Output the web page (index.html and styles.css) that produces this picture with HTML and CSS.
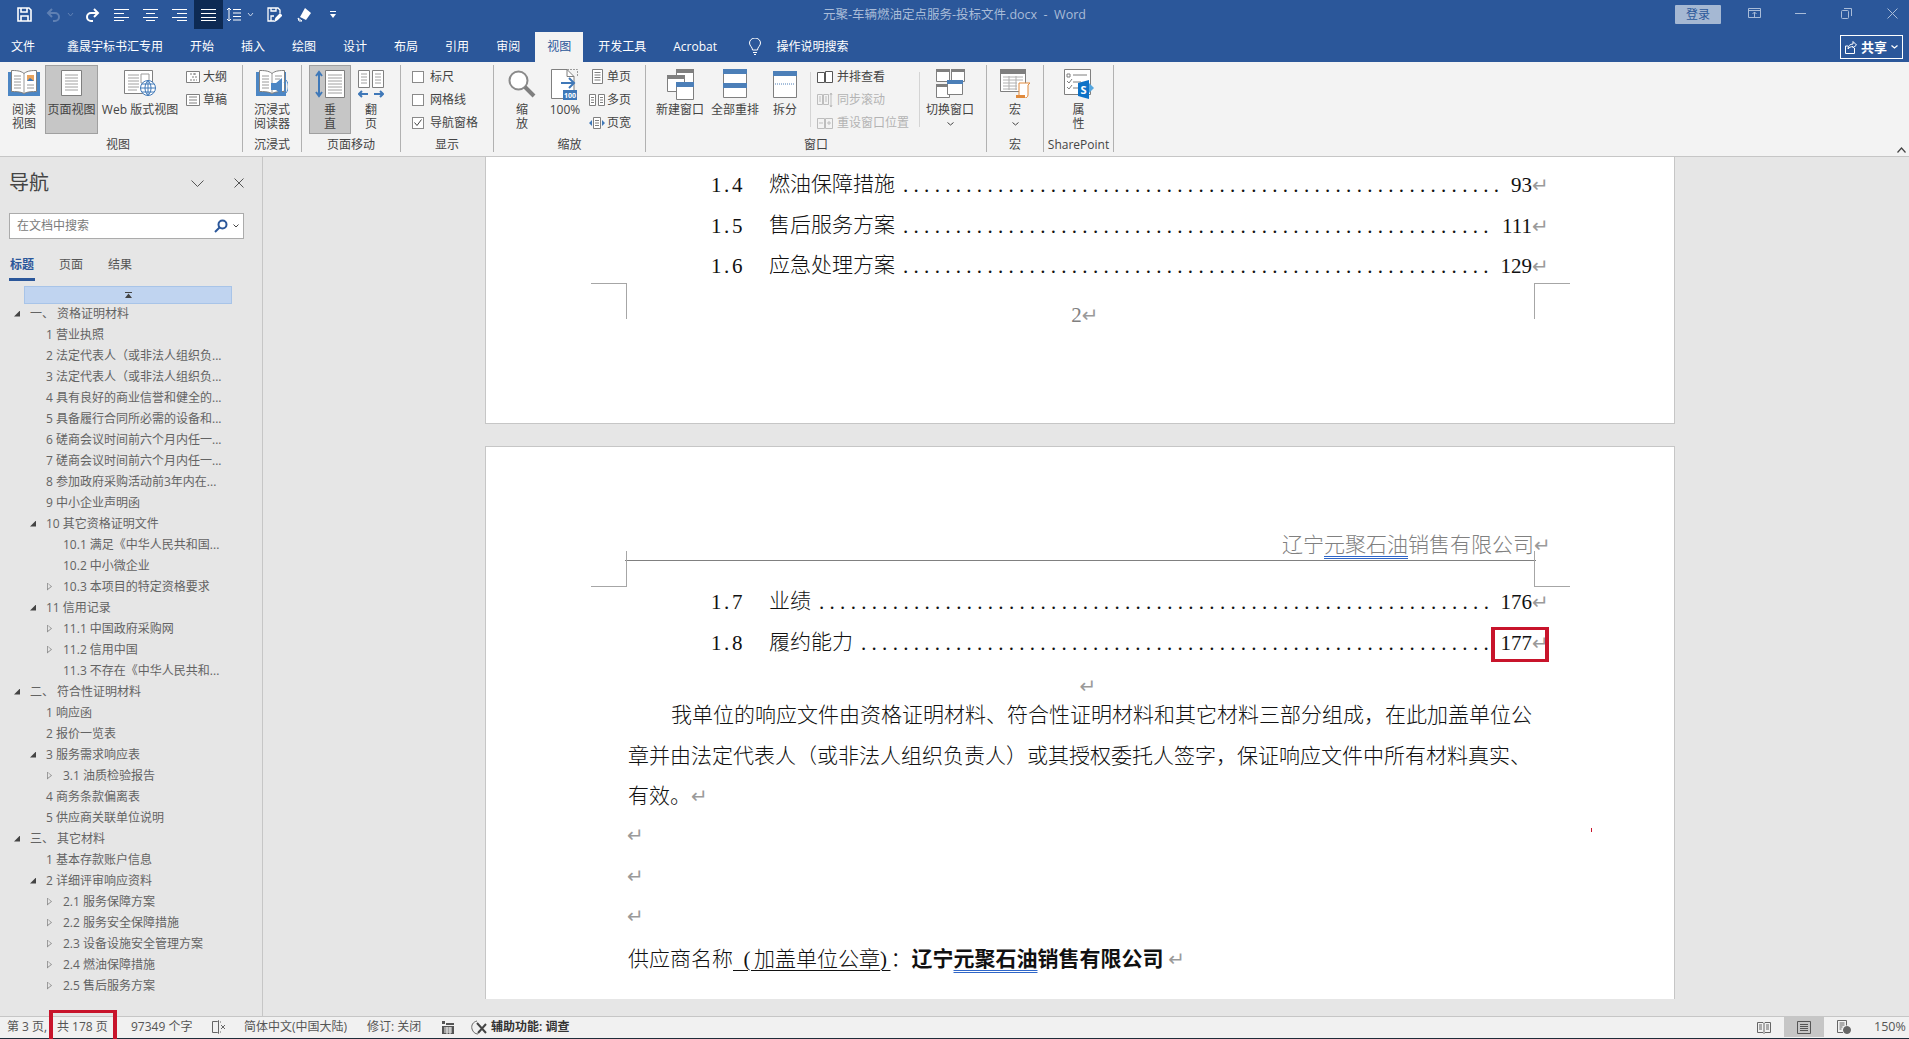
FILE: index.html
```html
<!DOCTYPE html>
<html lang="zh-CN">
<head>
    <meta charset="UTF-8">
    <title>元聚-车辆燃油定点服务-投标文件.docx - Word</title>
    <link rel="stylesheet" href="styles.css">
</head>
<body>
    <!-- Title bar -->
    <header class="title-bar">
        <div class="qat">
            <span class="qat-btn"><svg width="15" height="15" viewBox="0 0 15 15" fill="none" stroke="#fff" stroke-width="1.6"><path d="M1 1h11l2 2v11H1z"/><path d="M4 1v4h6V1M4 14V9h7v5"/></svg></span>
            <span class="qat-btn undo"><svg width="15" height="14" viewBox="0 0 15 14" fill="none" stroke="#5f80b3" stroke-width="2"><path d="M6 1L2 5l4 4M2 5h7a4 4 0 0 1 0 8H7"/></svg><svg class="caret" width="7" height="4" viewBox="0 0 7 4" fill="none" stroke="#5f80b3"><path d="M1 0l2.5 3L6 0"/></svg></span>
            <span class="qat-btn"><svg width="15" height="14" viewBox="0 0 15 14" fill="none" stroke="#fff" stroke-width="2"><path d="M9 1l4 4-4 4M13 5H6a4 4 0 0 0 0 8h2"/></svg></span>
            <span class="qat-btn"><svg width="15" height="12" viewBox="0 0 15 12" stroke="#fff"><path d="M0 .5h15M0 4.500h10M0 8.500h15M0 11.500h10"/></svg></span>
            <span class="qat-btn"><svg width="15" height="12" viewBox="0 0 15 12" stroke="#fff"><path d="M0 .5h15M3 4.500h9M0 8.500h15M3 11.500h9"/></svg></span>
            <span class="qat-btn"><svg width="15" height="12" viewBox="0 0 15 12" stroke="#fff"><path d="M0 .5h15M5 4.500h10M0 8.500h15M5 11.500h10"/></svg></span>
            <span class="qat-btn on"><svg width="15" height="12" viewBox="0 0 15 12" stroke="#fff"><path d="M0 .5h15M0 4.500h15M0 8.500h15M0 11.500h15"/></svg></span>
            <span class="qat-btn spacing"><svg width="15" height="15" viewBox="0 0 15 15" fill="none" stroke="#fff"><path d="M3 1v13M1 3l2-2 2 2M1 12l2 2 2-2M7 2.500h8M7 6h8M7 9.500h8M7 13h8"/></svg><svg class="caret" width="7" height="4" viewBox="0 0 7 4" fill="none" stroke="#c5d2e6"><path d="M1 0l2.500 3L6 0"/></svg></span>
            <span class="qat-btn"><svg width="15" height="15" viewBox="0 0 15 15" fill="none" stroke="#fff" stroke-width="1.300"><path d="M7 14H1V1h10l2 2v3"/><path d="M4 1v3h5V1M4 14V9h3"/><path d="M8 14l1-3 4-4 1.500 1.500-4 4z" fill="#fff"/></svg></span>
            <span class="qat-btn ink"><svg width="15" height="15" viewBox="0 0 15 15" fill="#fff"><path d="M8 1l6 5-5 7-6-3z"/><path d="M1 11l4 3H2z" fill="none" stroke="#fff"/></svg></span>
            <span class="qat-btn more"><svg width="6" height="7" viewBox="0 0 6 7" fill="#fff"><path d="M0 0h6v1H0zM0 3h6L3 7z"/></svg></span>
        </div>
        <div class="doc-title">元聚-车辆燃油定点服务-投标文件.docx&nbsp; - &nbsp;Word</div>
        <div class="win-ctl">
            <span class="login">登录</span>
            <span class="win-btn"><svg width="13" height="10" viewBox="0 0 13 10" fill="none" stroke="#a9bcd8"><path d="M.5.500h12v9H.5zM.5 2.500h12M6.500 9V4M4.500 6l2-2 2 2"/></svg></span>
            <span class="win-btn"><svg width="11" height="1" viewBox="0 0 11 1" stroke="#a9bcd8"><path d="M0 .5h11"/></svg></span>
            <span class="win-btn"><svg width="11" height="11" viewBox="0 0 11 11" fill="none" stroke="#a9bcd8"><rect x=".5" y="2.500" width="7" height="8" rx="1"/><path d="M3 .5h7.500V8"/></svg></span>
            <span class="win-btn"><svg width="11" height="11" viewBox="0 0 11 11" fill="none" stroke="#a9bcd8"><path d="M.5.500l10 10M10.500.500l-10 10"/></svg></span>
        </div>
    </header>

    <!-- Tabs -->
    <nav class="tabs">
        <span class="tab tab-file">文件</span>
        <span class="tab">鑫晟宇标书汇专用</span>
        <span class="tab">开始</span>
        <span class="tab">插入</span>
        <span class="tab">绘图</span>
        <span class="tab">设计</span>
        <span class="tab">布局</span>
        <span class="tab">引用</span>
        <span class="tab">审阅</span>
        <span class="tab active">视图</span>
        <span class="tab">开发工具</span>
        <span class="tab">Acrobat</span>
        <span class="tell-me">
            <svg width="12" height="18" viewBox="0 0 12 18" fill="none" stroke="#fff"><path d="M3.500 12c0-3-3-4-3-7a5.500 5 0 0 1 11 0c0 3-3 4-3 7zM4 14.500h4M5 16.500h2"/></svg>
            操作说明搜索
        </span>
        <span class="share">
            <svg width="12" height="14" viewBox="0 0 12 14" fill="none" stroke="#fff"><path d="M3 6H.5v7.500h9V8M3 9c0-3 2-5 5-5V1.500L11.500 5 8 8V6.500c-2 0-4 1-5 2.500z"/></svg>
            <b>共享</b>
            <svg width="7" height="4" viewBox="0 0 7 4" fill="none" stroke="#fff" stroke-width="1.300"><path d="M.5.500l3 2.500 3-2.500"/></svg>
        </span>
    </nav>

    <!-- Ribbon -->
    <section class="ribbon">
        <div class="group g-view">
            <div class="group-body">
                <div class="big w42">
                    <svg width="32" height="26" viewBox="0 0 32 26"><path d="M0 2h4v20h11l1 2 1-2h11V2h4v24H0z" fill="#4c86c4"/><path d="M3.500.5c4 0 9 0 12.500 3 3.500-3 8.500-3 12.500-3v21c-4 0-9 0-12.500 2-3.500-2-8.500-2-12.500-2z" fill="#fff" stroke="#7f7f7f"/><path d="M16 3v20M6 6h7M6 9h7M6 12h7M6 15h7M6 18h7M19 15h7M19 18h7" stroke="#9a9a9a"/><path d="M19 5h7v6h-7z" fill="#e8a35d"/><path d="M19 11l3-3 4 3z" fill="#3f78b8"/></svg>
                    <span>阅读<br>视图</span>
                </div>
                <div class="big w53 on">
                    <svg width="21" height="26" viewBox="0 0 21 26" fill="#fff" stroke="#7f7f7f"><path d="M.5.500h20v25H.5z"/><path d="M4 5h13M4 8h13M4 11h13M4 14h13M4 17h13M4 20h13" stroke="#a0a0a0" fill="none"/></svg>
                    <span>页面视图</span>
                </div>
                <div class="big w80">
                    <svg width="32" height="26" viewBox="0 0 32 26"><path d="M.5.500h28v23H.5z" fill="#fff" stroke="#7f7f7f"/><path d="M4 5h11M4 8h11M4 11h11M4 14h11M4 17h11M4 20h9" stroke="#a0a0a0"/><path d="M17 4h8v9h-8z" fill="#fff" stroke="#9a9a9a"/><circle cx="24" cy="18" r="7.500" fill="#fff" stroke="#3f78b8"/><path d="M16.500 18h15M24 10.500v15M18 14h12M18 22h12M24 10.500c-4 4-4 11 0 15M24 10.500c4 4 4 11 0 15" stroke="#3f78b8" fill="none"/></svg>
                    <span>Web 版式视图</span>
                </div>
                <div class="stack s-view">
                    <div class="small"><span class="ico"><svg width="14" height="12" viewBox="0 0 14 12" fill="#fff" stroke="#7f7f7f"><path d="M.5.500h13v11H.5z"/><path d="M4 3h6M8 3h3M6 6h5M4 9h7" stroke-dasharray="2 1" fill="none"/></svg></span>大纲</div>
                    <div class="small"><span class="ico"><svg width="14" height="12" viewBox="0 0 14 12" fill="#fff" stroke="#7f7f7f"><path d="M.5.500h13v11H.5z"/><path d="M3 3h8M3 6h8M3 9h8" fill="none"/></svg></span>草稿</div>
                </div>
            </div>
            <div class="group-label">视图</div>
        </div>

        <div class="group g-immersive">
            <div class="group-body">
                <div class="big w58">
                    <svg width="32" height="26" viewBox="0 0 32 26"><path d="M0 2h4v20h11l1 2 1-2h11V2h2v24H0z" fill="#4c86c4"/><path d="M3.500.5c4 0 9 0 12.500 3 3.500-3 8.500-3 12.500-3v21c-4 0-9 0-12.500 2-3.500-2-8.500-2-12.500-2z" fill="#fff" stroke="#7f7f7f"/><path d="M16 3v20M6 6h7M6 9h7M6 12h7M6 15h7M6 18h7M19 6h7M19 9h5" stroke="#9a9a9a"/><path d="M15 13h5l6-5v17l-6-5h-5z" fill="#4c86c4"/><path d="M28 12c2 3 2 6 0 9M30 10c3 4 3 9 0 13" stroke="#4c86c4" fill="none"/></svg>
                    <span>沉浸式<br>阅读器</span>
                </div>
            </div>
            <div class="group-label">沉浸式</div>
        </div>

        <div class="group g-move">
            <div class="group-body">
                <div class="big w42 on">
                    <svg width="30" height="28" viewBox="0 0 30 28"><path d="M4 3v22M1 6l3-4 3 4M1 22l3 4 3-4" stroke="#3f78b8" stroke-width="2" fill="none"/><path d="M10.500.5h19v27h-19z" fill="#fff" stroke="#7f7f7f"/><path d="M13 5h14M13 8h14M13 11h14M13 14h14M13 17h14M13 20h14M13 23h14" stroke="#a0a0a0"/></svg>
                    <span>垂<br>直</span>
                </div>
                <div class="big w40">
                    <svg width="26" height="28" viewBox="0 0 26 28"><path d="M.5.500h11v17H.5zM14.500.500h11v17h-11z" fill="#fff" stroke="#7f7f7f"/><path d="M3 4h6M3 7h6M3 10h6M3 13h6M17 4h6M17 7h6M17 10h6M17 13h6" stroke="#a0a0a0"/><path d="M1 24h9M4 21l-3 3 3 3M16 24h9M22 21l3 3-3 3" stroke="#3f78b8" stroke-width="2" fill="none"/></svg>
                    <span>翻<br>页</span>
                </div>
            </div>
            <div class="group-label">页面移动</div>
        </div>

        <div class="group g-show">
            <div class="group-body">
                <div class="stack">
                    <div class="small"><span class="check"></span>标尺</div>
                    <div class="small"><span class="check"></span>网格线</div>
                    <div class="small"><span class="check"><svg width="10" height="9" viewBox="0 0 10 9" fill="none" stroke="#444"><path d="M1.500 4.500l2.500 3 4.500-6"/></svg></span>导航窗格</div>
                </div>
            </div>
            <div class="group-label">显示</div>
        </div>

        <div class="group g-zoom">
            <div class="group-body">
                <div class="big w44">
                    <svg width="28" height="28" viewBox="0 0 28 28" fill="none"><circle cx="10.500" cy="10.500" r="9" fill="#fff" stroke="#8a8a8a" stroke-width="2"/><path d="M17 17l9 9" stroke="#7f7f7f" stroke-width="4"/></svg>
                    <span>缩<br>放</span>
                </div>
                <div class="big w42">
                    <svg width="28" height="32" viewBox="0 0 28 32" class="up"><path d="M.5.500H16l7 7v22H.5z" fill="#fff" stroke="#7f7f7f"/><path d="M16 .5v7h7" fill="none" stroke="#7f7f7f"/><path d="M16 .5h10.500v7" fill="none" stroke="#9a9a9a" stroke-dasharray="2 1"/><path d="M10 14h13M18 9l5 5-5 5" stroke="#3f78b8" stroke-width="2" fill="none"/><rect x="12" y="21" width="14" height="10" fill="#3f78b8"/><text x="19" y="29" class="svg-mini">100</text></svg>
                    <span class="low">100%</span>
                </div>
                <div class="stack s-zoom">
                    <div class="small"><span class="ico"><svg width="11" height="15" viewBox="0 0 11 15" fill="#fff" stroke="#7f7f7f"><path d="M.5.500h10v14H.5z"/><path d="M2.500 3.500h6M2.500 6h6M2.500 8.500h6M2.500 11h6" fill="none"/></svg></span>单页</div>
                    <div class="small"><span class="ico"><svg width="16" height="12" viewBox="0 0 16 12" fill="#fff" stroke="#7f7f7f"><path d="M.5.500h6v11h-6zM9.500.500h6v11h-6z"/><path d="M2 3.500h3M2 6h3M2 8.500h3M11 3.500h3M11 6h3M11 8.500h3" fill="none"/></svg></span>多页</div>
                    <div class="small"><span class="ico"><svg width="16" height="12" viewBox="0 0 16 12"><path d="M4.500.500h7v11h-7z" fill="#fff" stroke="#7f7f7f"/><path d="M6 3.500h4M6 6h4M6 8.500h4" stroke="#7f7f7f"/><path d="M3 3L0 6l3 3zM13 3l3 3-3 3z" fill="#3f78b8"/></svg></span>页宽</div>
                </div>
            </div>
            <div class="group-label">缩放</div>
        </div>

        <div class="group g-window">
            <div class="group-body">
                <div class="big w50">
                    <svg width="27" height="31" viewBox="0 0 27 31" class="up"><path d="M9.500.500h17v17h-17z" fill="#fff" stroke="#7f7f7f"/><path d="M9 0h18v4H9z" fill="#7f7f7f"/><path d="M.5 6.500h17v16H.5z" fill="#fff" stroke="#7f7f7f"/><path d="M0 6h18v4H0z" fill="#7f7f7f"/><path d="M9.500 13.500h17v17h-17z" fill="#fff" stroke="#7f7f7f"/><path d="M9 13h18v5H9z" fill="#4c7fb8"/></svg>
                    <span class="low">新建窗口</span>
                </div>
                <div class="big w50 m5">
                    <svg width="24" height="29" viewBox="0 0 24 29" class="up"><path d="M.5.500h23v28H.5z" fill="#fff" stroke="#7f7f7f"/><path d="M0 0h24v5H0zM0 14h24v5H0z" fill="#4c7fb8"/></svg>
                    <span class="low">全部重排</span>
                </div>
                <div class="big w50">
                    <svg width="24" height="29" viewBox="0 0 24 29" class="up"><path d="M.5 2.500h23v26H.5z" fill="#fff" stroke="#7f7f7f"/><path d="M0 2h24v5H0z" fill="#4c7fb8"/><path d="M2 15h20" stroke="#4c7fb8" stroke-dasharray="1 1"/></svg>
                    <span class="low">拆分</span>
                </div>
                <i class="thin-sep"></i>
                <div class="stack s-window">
                    <div class="small"><span class="ico"><svg width="16" height="12" viewBox="0 0 16 12" fill="#fff" stroke="#555"><path d="M.5 1.500h7v10h-7zM8.500.500h7v11h-7z"/></svg></span>并排查看</div>
                    <div class="small dim"><span class="ico"><svg width="16" height="16" viewBox="0 0 16 16" fill="#f3f3f3" stroke="#bdbdbd"><path d="M.5 2.500h5v10h-5zM6.500 2.500h5v10h-5z"/><path d="M2 5h2M2 7h2M2 9h2M8 5h2M8 7h2M8 9h2M14 1v14M13 3l1-2 1 2M13 13l1 2 1-2" fill="none"/></svg></span>同步滚动</div>
                    <div class="small dim"><span class="ico"><svg width="16" height="12" viewBox="0 0 16 12" fill="#f3f3f3" stroke="#bdbdbd"><path d="M.5 1.500h7v10h-7zM8.500 1.500h7v10h-7z"/><path d="M2 6h4M12 4v4M10 6h4" fill="none"/></svg></span>重设窗口位置</div>
                </div>
                <i class="thin-sep"></i>
                <div class="big w50 m5">
                    <svg width="29" height="31" viewBox="0 0 29 31" class="up"><path d="M.5.500h13v12H.5zM15.500.500h13v12h-13zM.5 15.500h13v13H.5z" fill="#fff" stroke="#7f7f7f"/><path d="M0 0h14v3H0zM15 0h14v3H15zM0 15h14v3H0z" fill="#7f7f7f"/><path d="M11.500 11.500h15v14h-15z" fill="#fff" stroke="#7f7f7f"/><path d="M11 11h16v4H11z" fill="#4c7fb8"/></svg>
                    <span class="low">切换窗口</span>
                    <svg class="caret-low" width="7" height="4" viewBox="0 0 7 4" fill="none" stroke="#444"><path d="M.5.500l3 2.500 3-2.500"/></svg>
                </div>
            </div>
            <div class="group-label">窗口</div>
        </div>

        <div class="group g-macro">
            <div class="group-body">
                <div class="big w56">
                    <svg width="31" height="29" viewBox="0 0 31 29" class="up"><path d="M.5.500h25v22H.5z" fill="#fff" stroke="#7f7f7f"/><path d="M0 0h26v5H0z" fill="#7f7f7f"/><path d="M3 8h20M3 11h20M3 14h14M3 17h14M3 20h14M9 7v14M16 7v14" stroke="#b0b0b0"/><path d="M19 14h11l-2 2v10c0 2-2 3-3 3h-7c2-1 2-2 1-3V16z" fill="#fff" stroke="#e08a3c"/><path d="M16 26h9v3h-9z" fill="#e08a3c"/></svg>
                    <span class="low">宏</span>
                    <svg class="caret-low" width="7" height="4" viewBox="0 0 7 4" fill="none" stroke="#444"><path d="M.5.500l3 2.500 3-2.500"/></svg>
                </div>
            </div>
            <div class="group-label">宏</div>
        </div>

        <div class="group g-sp">
            <div class="group-body">
                <div class="big w69">
                    <svg width="30" height="30" viewBox="0 0 30 30" class="up"><path d="M.5.500h26v25H.5z" fill="#fff" stroke="#7f7f7f"/><path d="M3 5h3v3H3zM9 6h14M3 12l2 2 3-4M9 13h8M3 18l2 2 3-4M9 19h6" fill="none" stroke="#7f7f7f"/><path d="M14 14l11-3v19l-11-3z" fill="#0d72c7"/><path d="M25 14l5 5-5 5z" fill="#53a6e0"/><text x="19.500" y="25" class="svg-sp">S</text></svg>
                    <span>属<br>性</span>
                </div>
            </div>
            <div class="group-label">SharePoint</div>
        </div>

        <svg class="collapse" width="9" height="6" viewBox="0 0 9 6" fill="none" stroke="#444" stroke-width="1.200"><path d="M.5 5.500l4-4.500 4 4.500"/></svg>
    </section>

    <main class="main">
        <!-- Navigation pane -->
        <aside class="nav-pane">
            <div class="nav-head">
                <h2>导航</h2>
                <svg width="13" height="7" viewBox="0 0 13 7" fill="none" stroke="#555"><path d="M.5.500l6 6 6-6"/></svg>
                <svg class="nav-close" width="10" height="10" viewBox="0 0 10 10" fill="none" stroke="#555"><path d="M.5.500l9 9M9.500.500l-9 9"/></svg>
            </div>
            <div class="nav-search">
                <span>在文档中搜索</span>
                <svg width="14" height="14" viewBox="0 0 14 14" fill="none" stroke="#2b579a" stroke-width="2"><circle cx="8.500" cy="5.500" r="4"/><path d="M5.500 8.500L1 13"/></svg>
                <svg width="6" height="4" viewBox="0 0 6 4" fill="none" stroke="#444"><path d="M.5.500L3 3 5.500.500"/></svg>
            </div>
            <div class="nav-tabs">
                <span class="current">标题</span>
                <span>页面</span>
                <span>结果</span>
            </div>
            <div class="nav-top"><svg width="7" height="6" viewBox="0 0 7 6" fill="#444"><path d="M0 0h7v1H0zM3.500 1.500L7 6H0z"/></svg></div>
            <div class="tree">
                <div class="node lv1"><i class="tw open"></i>一、 资格证明材料</div>
                <div class="node lv2"><i class="tw"></i>1 营业执照</div>
                <div class="node lv2"><i class="tw"></i>2 法定代表人（或非法人组织负...</div>
                <div class="node lv2"><i class="tw"></i>3 法定代表人（或非法人组织负...</div>
                <div class="node lv2"><i class="tw"></i>4 具有良好的商业信誉和健全的...</div>
                <div class="node lv2"><i class="tw"></i>5 具备履行合同所必需的设备和...</div>
                <div class="node lv2"><i class="tw"></i>6 磋商会议时间前六个月内任一...</div>
                <div class="node lv2"><i class="tw"></i>7 磋商会议时间前六个月内任一...</div>
                <div class="node lv2"><i class="tw"></i>8 参加政府采购活动前3年内在...</div>
                <div class="node lv2"><i class="tw"></i>9 中小企业声明函</div>
                <div class="node lv2"><i class="tw open"></i>10 其它资格证明文件</div>
                <div class="node lv3"><i class="tw"></i>10.1 满足《中华人民共和国...</div>
                <div class="node lv3"><i class="tw"></i>10.2 中小微企业</div>
                <div class="node lv3"><i class="tw shut"></i>10.3 本项目的特定资格要求</div>
                <div class="node lv2"><i class="tw open"></i>11 信用记录</div>
                <div class="node lv3"><i class="tw shut"></i>11.1 中国政府采购网</div>
                <div class="node lv3"><i class="tw shut"></i>11.2 信用中国</div>
                <div class="node lv3"><i class="tw"></i>11.3 不存在《中华人民共和...</div>
                <div class="node lv1"><i class="tw open"></i>二、 符合性证明材料</div>
                <div class="node lv2"><i class="tw"></i>1 响应函</div>
                <div class="node lv2"><i class="tw"></i>2 报价一览表</div>
                <div class="node lv2"><i class="tw open"></i>3 服务需求响应表</div>
                <div class="node lv3"><i class="tw shut"></i>3.1 油质检验报告</div>
                <div class="node lv2"><i class="tw"></i>4 商务条款偏离表</div>
                <div class="node lv2"><i class="tw"></i>5 供应商关联单位说明</div>
                <div class="node lv1"><i class="tw open"></i>三、 其它材料</div>
                <div class="node lv2"><i class="tw"></i>1 基本存款账户信息</div>
                <div class="node lv2"><i class="tw open"></i>2 详细评审响应资料</div>
                <div class="node lv3"><i class="tw shut"></i>2.1 服务保障方案</div>
                <div class="node lv3"><i class="tw shut"></i>2.2 服务安全保障措施</div>
                <div class="node lv3"><i class="tw shut"></i>2.3 设备设施安全管理方案</div>
                <div class="node lv3"><i class="tw shut"></i>2.4 燃油保障措施</div>
                <div class="node lv3"><i class="tw shut"></i>2.5 售后服务方案</div>
            </div>
        </aside>

        <!-- Document -->
        <div class="doc-col">
            <div class="doc-view">
                <article class="page page-one">
                    <i class="crop bl"></i><i class="crop br"></i>
                    <div class="toc-row"><span class="half toc-no">1.4</span><span class="toc-title">燃油保障措施</span><span class="half dots">.........................................................</span><span class="half toc-page">93</span><span class="ret">↵</span></div>
                    <div class="toc-row"><span class="half toc-no">1.5</span><span class="toc-title">售后服务方案</span><span class="half dots">........................................................</span><span class="half toc-page">111</span><span class="ret">↵</span></div>
                    <div class="toc-row"><span class="half toc-no">1.6</span><span class="toc-title">应急处理方案</span><span class="half dots">........................................................</span><span class="half toc-page">129</span><span class="ret">↵</span></div>
                    <div class="page-no"><span class="half">2</span><span class="ret-in">↵</span></div>
                </article>

                <article class="page page-two">
                    <i class="crop tl"></i><i class="crop tr"></i>
                    <i class="speck"></i>
                    <div class="page-head">辽宁<span class="wavy">元聚石油</span>销售有限公司<span class="ret">↵</span></div>
                    <div class="toc-row"><span class="half toc-no">1.7</span><span class="toc-title">业绩</span><span class="half dots">................................................................</span><span class="half toc-page">176</span><span class="ret">↵</span></div>
                    <div class="toc-row"><span class="half toc-no">1.8</span><span class="toc-title">履约能力</span><span class="half dots">............................................................</span><span class="half toc-page marked">177</span><span class="ret">↵</span></div>
                    <div class="toc-end"><span class="ret-in">↵</span></div>
                    <p class="para first">我单位的响应文件由资格证明材料、符合性证明材料和其它材料三部分组成，在此加盖单位公</p>
                    <p class="para">章并由法定代表人（或非法人组织负责人）或其授权委托人签字，保证响应文件中所有材料真实、</p>
                    <p class="para">有效。<span class="ret-in">↵</span></p>
                    <p class="para"><span class="ret-in none">↵</span></p>
                    <p class="para"><span class="ret-in none">↵</span></p>
                    <p class="para"><span class="ret-in none">↵</span></p>
                    <p class="para sign">供应商名称<span class="under"><span class="half paren"> (</span>加盖单位公章<span class="half paren">)</span></span>：<b>辽宁<span class="wavy">元聚石油</span>销售有限公司</b> <span class="ret-in">↵</span></p>
                </article>
            </div>
            <div class="h-scroll"></div>
        </div>
    </main>

    <!-- Status bar -->
    <footer class="status">
        <span class="st page-at">第 3 页,</span>
        <span class="st st-total">共 178 页</span>
        <span class="st st-words">97349 个字</span>
        <svg class="st-proof" width="14" height="14" viewBox="0 0 14 14" fill="none" stroke="#666"><path d="M5.500 1.500h-5v11h5l1 1v-13zM8 2h1M8 12h1M9 5l4 4M13 5L9 9"/></svg>
        <span class="st st-lang">简体中文(中国大陆)</span>
        <span class="st st-rev">修订: 关闭</span>
        <svg class="st-macro" width="12" height="13" viewBox="0 0 12 13" fill="#555"><path d="M0 0h3v3H0zM4 2h8v2H4zM0 5h12v8H0z"/><path d="M2 7h8M2 9h8M2 11h8M5 6v7M8 6v7" stroke="#f1f1f1" fill="none"/></svg>
        <svg class="st-access" width="17" height="15" viewBox="0 0 17 15" fill="none"><path d="M6 1C2 2 0 5 1 9c1 3 3 5 6 5" stroke="#666"/><path d="M6 3l9 10M15 4L7 13" stroke="#444" stroke-width="2"/></svg>
        <span class="st st-help">辅助功能: 调查</span>
        <div class="view-btns">
            <span class="view-btn"><svg width="14" height="13" viewBox="0 0 14 13" fill="none" stroke="#666"><path d="M.5 1.500h5.500l1 1 1-1h5.500v10H8l-1 1-1-1H.5zM7 2.500v9M2 4h3M2 6h3M2 8h3M9 4h3M9 6h3M9 8h3"/></svg></span>
            <span class="view-btn on"><svg width="14" height="13" viewBox="0 0 14 13" fill="none" stroke="#555"><path d="M.5.500h13v12H.5zM3 3.500h8M3 5.500h8M3 7.500h8M3 9.500h8"/></svg></span>
            <span class="view-btn"><svg width="14" height="14" viewBox="0 0 14 14" fill="none" stroke="#666"><path d="M6 12.500H.5V.5h9v5M2.500 3h5M2.500 5h5M2.500 7h3M2.500 9h2"/><circle cx="10" cy="10" r="3.500" fill="#666"/></svg></span>
            <span class="zoom-val">150%</span>
        </div>
    </footer>
</body>
</html>
```

FILE: styles.css
```css
/* Global Styles */
*, *::before, *::after {
    margin: 0;
    padding: 0;
    box-sizing: border-box;
}

html, body {
    height: 100%;
    overflow: hidden;
}

body {
    display: flex;
    flex-direction: column;
    width: 1909px;
    height: 1039px;
    font-family: "Open Sans", "Noto Sans CJK SC", sans-serif;
    font-size: 12px;
    line-height: 14px;
    color: #444;
    background-color: #e6e6e6;
}

svg {
    display: block;
    flex-shrink: 0;
}

i {
    font-style: normal;
}

/* Title bar */
.title-bar {
    display: grid;
    grid-template-columns: 1fr auto 1fr;
    height: 32px;
    background-color: #2b579a;
}

.qat {
    display: flex;
    padding-left: 10px;
}

.qat-btn {
    display: flex;
    align-items: center;
    justify-content: center;
    width: 29px;
    height: 29px;
}

.qat-btn.on {
    background-color: #0d2a54;
}

.qat-btn.undo {
    width: 39px;
    justify-content: flex-start;
    padding-left: 7px;
}

.qat-btn.spacing {
    width: 37px;
    justify-content: flex-start;
    padding-left: 3px;
}

.qat-btn.ink {
    margin-left: 1px;
}

.qat-btn.more {
    width: 27px;
}

.caret {
    margin-left: 6px;
}

.doc-title {
    align-self: center;
    padding-bottom: 3px;
    color: #a9bcd8;
    font-size: 12.5px;
}

.win-ctl {
    display: flex;
    justify-content: flex-end;
    margin-right: -6px;
}

.login {
    align-self: flex-start;
    width: 46px;
    height: 19px;
    margin: 5px 10px 0 0;
    border-radius: 1px;
    background-color: #a5b8d3;
    color: #2b579a;
    line-height: 19px;
    text-align: center;
}

.win-btn {
    display: flex;
    align-items: center;
    justify-content: center;
    width: 46px;
    height: 26px;
}

/* Tabs */
.tabs {
    display: flex;
    align-items: stretch;
    height: 30px;
    background-color: #2b579a;
    color: #fff;
    line-height: 30px;
}

.tab {
    margin: 0 1.5px;
    padding: 0 12px;
}

.tab-file {
    margin: 0;
    padding: 0 18.5px 0 11px;
}

.tab.active {
    background-color: #f3f3f3;
    color: #2b579a;
}

.tell-me {
    display: flex;
    align-items: center;
    gap: 15px;
    margin-left: 19px;
}

.share {
    display: flex;
    align-items: center;
    justify-content: center;
    gap: 4px;
    width: 63px;
    height: 24px;
    margin: 3px 6px 0 auto;
    border: 1px solid #fff;
}

.share b {
    font-weight: 700;
    font-size: 13px;
}

/* Ribbon */
.ribbon {
    position: relative;
    display: flex;
    flex-shrink: 0;
    height: 95px;
    padding-top: 3px;
    border-bottom: 1px solid #c6c6c6;
    background-color: #f3f3f3;
}

.group {
    display: flex;
    flex-direction: column;
    height: 87px;
    border-right: 1px solid #b1b1b1;
}

.group-body {
    display: flex;
    height: 69px;
}

.group-label {
    margin-top: 4px;
    line-height: 14px;
    text-align: center;
    white-space: nowrap;
}

.g-view { width: 243px; padding-left: 3px; }
.g-view .group-label { padding-right: 9px; }
.g-immersive { width: 59px; }
.g-move { width: 99px; padding-left: 7px; }
.g-move .group-label { margin-left: -7px; }
.g-show { width: 93px; padding-left: 11px; }
.g-show .group-label { margin-left: -11px; }
.g-zoom { width: 152px; padding-left: 6px; }
.g-zoom .group-label { margin-left: -6px; }
.g-window { width: 341px; padding-left: 9px; }
.g-window .group-label { margin-left: -9px; }
.g-macro { width: 57px; }
.g-sp { width: 70px; }

.big {
    position: relative;
    display: flex;
    flex-direction: column;
    align-items: center;
    flex-shrink: 0;
    height: 69px;
    padding-top: 5px;
    text-align: center;
    white-space: nowrap;
}

.big > span {
    position: absolute;
    top: 38px;
    left: 0;
    right: 0;
}

.big .up {
    margin-top: -1px;
}

.big.on {
    border: 1px solid #a0a0a0;
    background-color: #c6c6c6;
    padding-top: 4px;
}

.big.on > span {
    top: 37px;
}

.caret-low {
    position: absolute;
    top: 57px;
}

.w40 { width: 40px; }
.w42 { width: 42px; }
.w44 { width: 44px; }
.w50 { width: 50px; }
.w53 { width: 53px; }
.w56 { width: 56px; }
.w58 { width: 58px; }
.w69 { width: 69px; }
.w80 { width: 80px; margin-left: 2px; }
.m5 { margin-left: 5px; }

.stack {
    display: flex;
    flex-direction: column;
    height: 69px;
    white-space: nowrap;
}

.small {
    display: flex;
    align-items: center;
    height: 23px;
}

.ico {
    display: flex;
    align-items: center;
    justify-content: center;
    width: 16px;
    margin-right: 2px;
}

.check {
    display: flex;
    align-items: center;
    justify-content: center;
    width: 12px;
    height: 12px;
    margin-right: 6px;
    border: 1px solid #8a8a8a;
    background-color: #fff;
}

.s-view { margin-left: 5px; }
.s-zoom { margin-left: 3px; }

.s-window {
    width: 108px;
    padding-left: 5px;
}

.s-window .ico {
    width: 18px;
    margin-right: 3px;
}

.thin-sep {
    width: 1px;
    height: 55px;
    margin-top: 7px;
    background-color: #d4d4d4;
}

.dim {
    color: #b3b3b3;
}

.svg-mini {
    font-family: "Open Sans", sans-serif;
    font-size: 7px;
    font-weight: 700;
    fill: #fff;
    text-anchor: middle;
}

.svg-sp {
    font-family: "Open Sans", sans-serif;
    font-size: 11px;
    font-weight: 700;
    fill: #fff;
    text-anchor: middle;
}

.collapse {
    position: absolute;
    right: 3px;
    bottom: 3px;
}

/* Main area */
.main {
    display: flex;
    flex: 1;
    min-height: 0;
}

/* Navigation pane */
.nav-pane {
    flex-shrink: 0;
    width: 263px;
    padding-top: 10px;
    border-right: 1px solid #c6c6c6;
    background-color: #e6e6e6;
    color: #636363;
    overflow: hidden;
}

.nav-head {
    display: flex;
    align-items: center;
    height: 32px;
    padding-left: 9px;
}

.nav-head h2 {
    width: 182px;
    font-size: 20px;
    font-weight: 400;
    color: #444;
    line-height: 34px;
}

.nav-close {
    margin-left: 30px;
}

.nav-search {
    display: flex;
    align-items: center;
    width: 235px;
    height: 26px;
    margin: 14px 0 0 9px;
    padding: 0 4px 0 7px;
    border: 1px solid #ababab;
    background-color: #fff;
    color: #7a7a7a;
}

.nav-search span {
    width: 200px;
}

.nav-search svg:last-child {
    margin-left: 5px;
}

.nav-tabs {
    display: flex;
    gap: 25px;
    height: 40px;
    padding: 18px 0 0 10px;
    color: #555;
    line-height: 16px;
}

.nav-tabs .current {
    position: relative;
    color: #2b579a;
    font-weight: 700;
}

.nav-tabs .current::after {
    content: "";
    position: absolute;
    left: -1px;
    right: -1px;
    top: 21px;
    height: 3px;
    background-color: #2b579a;
}

.nav-top {
    display: flex;
    align-items: center;
    justify-content: center;
    width: 208px;
    height: 18px;
    margin: 7px 0 0 24px;
    border: 1px solid #a8c4e8;
    background-color: #c0d4f0;
}

.tree {
    margin-top: -1px;
}

.node {
    display: flex;
    align-items: center;
    height: 21px;
    white-space: nowrap;
}

.lv1 { padding-left: 14px; }
.lv2 { padding-left: 30px; }
.lv3 { padding-left: 47px; }

.tw {
    position: relative;
    width: 16px;
    height: 8px;
}

.tw.open::before {
    content: "";
    position: absolute;
    left: 0;
    top: 1px;
    width: 6px;
    height: 6px;
    background-color: #444;
    clip-path: polygon(100% 0, 100% 100%, 0 100%);
}

.tw.shut::before {
    content: "";
    position: absolute;
    left: 0;
    top: 0;
    width: 5px;
    height: 8px;
    background-color: #8a8a8a;
    clip-path: polygon(0 0, 100% 50%, 0 100%, 0 86%, 78% 50%, 16% 14%, 16% 86%, 0 86%);
}

/* Document */
.doc-col {
    display: flex;
    flex-direction: column;
    flex: 1;
    min-width: 0;
}

.doc-view {
    flex: 1;
    min-height: 0;
    overflow: hidden;
    padding-left: 222px;
}

.h-scroll {
    height: 17px;
    flex-shrink: 0;
    background-color: #e6e6e6;
}

.page {
    position: relative;
    width: 1190px;
    padding: 0 142px;
    border: 1px solid #c6c6c6;
    background-color: #fff;
    color: #111;
    font-family: "Noto Sans CJK SC", sans-serif;
    font-size: 21px;
    font-weight: 300;
    line-height: 40.6px;
    white-space: nowrap;
}

.page-one {
    height: 267px;
    padding-top: 8px;
    border-top: 0;
}

.page-two {
    height: 640px;
    margin-top: 22px;
    padding-top: 83px;
}

.half {
    font-family: "Liberation Serif", serif;
    font-size: 21px;
    font-weight: 400;
}

.toc-row {
    display: flex;
    height: 40.6px;
    padding-left: 83px;
}

.toc-no {
    width: 58px;
    letter-spacing: 2.6px;
}

.toc-title {
    margin-top: -3px;
}

.dots {
    flex: 1;
    min-width: 0;
    margin-left: 8px;
    letter-spacing: 5.3px;
}

.toc-page {
    position: relative;
}

.paren {
    letter-spacing: 3.5px;
    word-spacing: 1.75px;
}

.ret,
.ret-in {
    font-family: "DejaVu Sans", sans-serif;
    font-size: 20px;
    font-weight: 400;
    color: #9a9a9a;
}

.ret {
    display: inline-block;
    width: 0;
    overflow: visible;
}

.ret-in.none {
    display: block;
    margin-left: -1px;
}

.marked::after {
    content: "";
    position: absolute;
    left: -10px;
    right: -17px;
    top: 4px;
    height: 35px;
    border: 4px solid #c8142b;
    border-top-width: 3px;
    border-bottom-width: 3px;
}

.page-no {
    margin-top: 7px;
    padding-left: 10px;
    text-align: center;
    color: #808080;
    line-height: 38px;
}

.page-no .half {
    color: #808080;
}

.page-head {
    height: 31px;
    margin: 0 -4px 21px -3px;
    padding-right: 2px;
    border-bottom: 1px solid #808080;
    color: #808080;
    line-height: 27px;
    text-align: right;
}

.wavy {
    text-decoration: underline double #2f66c8 1px;
    text-underline-offset: 4px;
}

.toc-end {
    height: 32px;
    padding-left: 16px;
    line-height: 42px;
    text-align: center;
}

.para {
    height: 40.6px;
    line-height: 36px;
}

.para.first {
    padding-left: 43px;
}

.under {
    text-decoration: underline #111 1px;
    text-underline-offset: 4px;
    white-space: pre;
}

.sign b {
    font-weight: 700;
}

.crop {
    position: absolute;
    width: 36px;
    height: 36px;
    border: 0 solid #a6a6a6;
}

.crop.bl {
    left: 105px;
    top: 126px;
    border-top-width: 1px;
    border-right-width: 1px;
}

.crop.br {
    left: 1048px;
    top: 126px;
    border-top-width: 1px;
    border-left-width: 1px;
}

.crop.tl {
    left: 105px;
    top: 104px;
    border-bottom-width: 1px;
    border-right-width: 1px;
}

.crop.tr {
    left: 1048px;
    top: 104px;
    border-bottom-width: 1px;
    border-left-width: 1px;
}

.speck {
    position: absolute;
    left: 1105px;
    top: 381px;
    width: 1px;
    height: 4px;
    background-color: #c8142b;
}

/* Status bar */
.status {
    display: flex;
    align-items: center;
    flex-shrink: 0;
    height: 23px;
    padding-bottom: 1px;
    border-top: 1px solid #c6c6c6;
    border-bottom: 1px solid #1f2d3a;
    background-color: #f1f1f1;
    color: #555;
    white-space: nowrap;
}

.st {
    flex-shrink: 0;
}

.page-at { width: 50px; margin-left: 7px; }
.st-total { position: relative; width: 74px; }
.st-words { width: 81px; }
.st-lang { width: 123px; margin-left: 18px; }
.st-rev { width: 75px; }
.st-access { margin: 0 3px 0 17px; }
.st-help { color: #333; font-weight: 600; }

.st-total::after {
    content: "";
    position: absolute;
    left: -8px;
    top: -10px;
    width: 68px;
    height: 31px;
    border: 4px solid #c8142b;
    border-top-width: 3px;
    border-bottom-width: 0;
}

.view-btns {
    display: flex;
    align-items: center;
    height: 100%;
    margin-left: auto;
    padding-right: 2px;
}

.view-btn {
    display: flex;
    align-items: center;
    justify-content: center;
    width: 40px;
    height: 100%;
}

.view-btn.on {
    background-color: #c6c6c6;
}

.zoom-val {
    width: 33px;
    margin-left: 10px;
    font-size: 12.5px;
}
```
